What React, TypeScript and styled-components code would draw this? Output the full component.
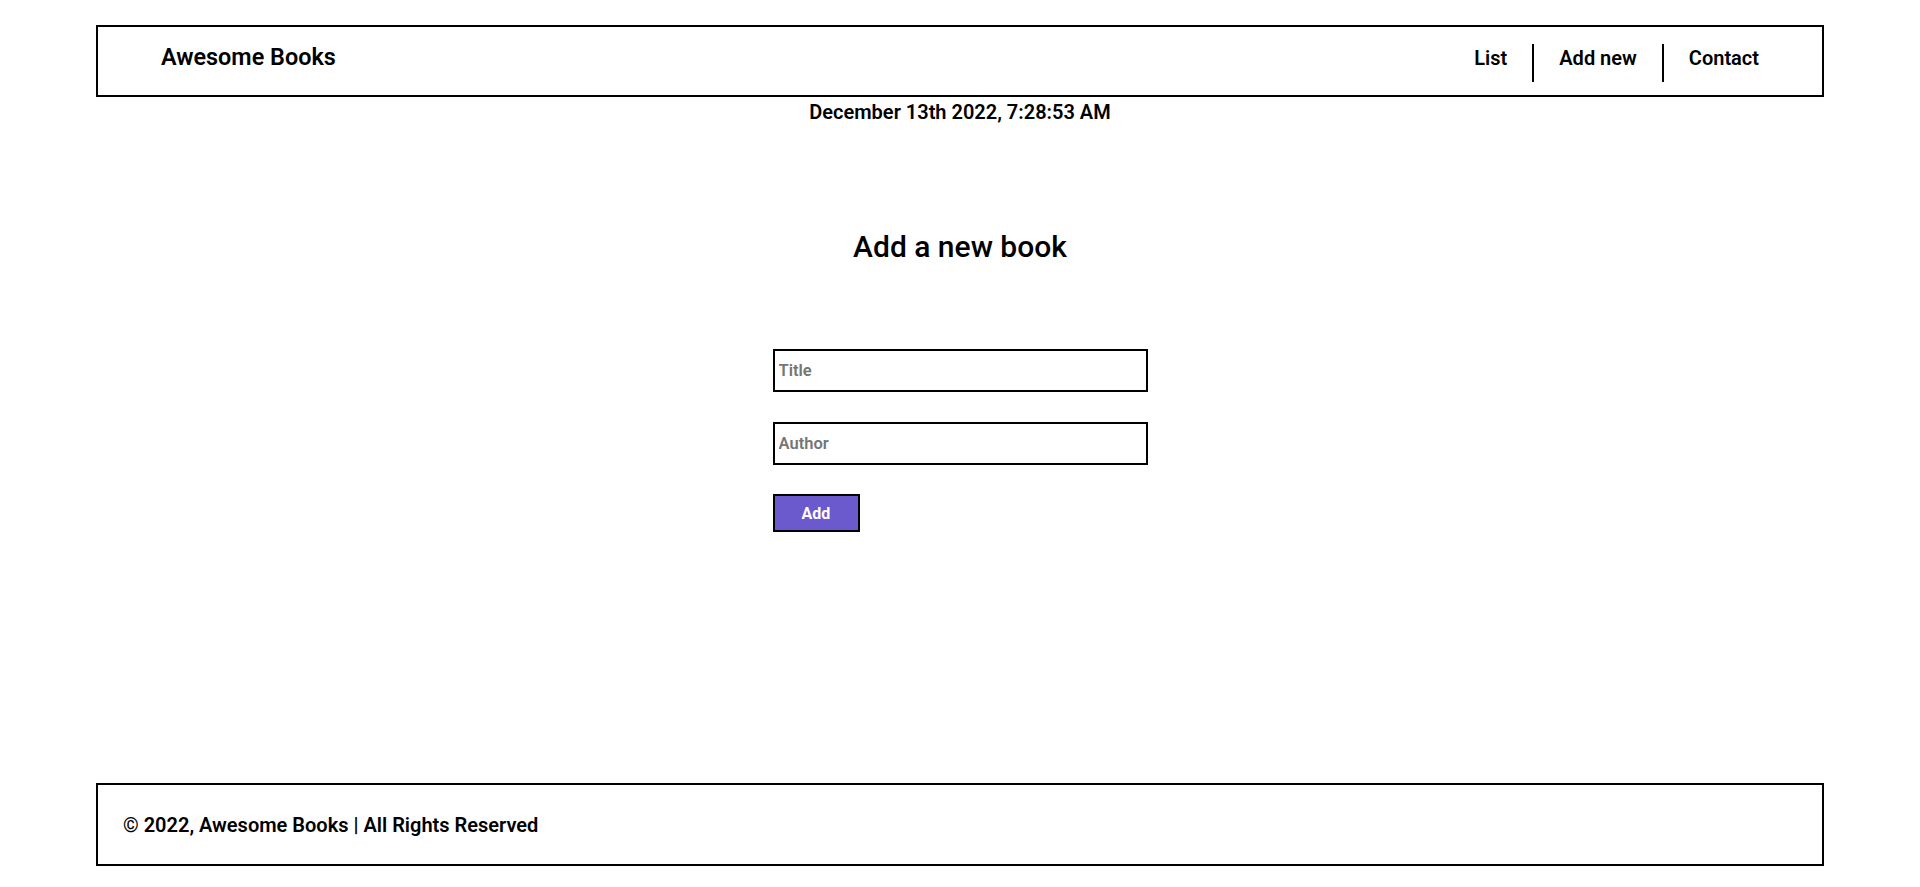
import React from "react";
import styled, { createGlobalStyle } from "styled-components";

const GlobalStyle = createGlobalStyle`
  * { box-sizing: border-box; }
  html, body { margin: 0; padding: 0; background: #fff; }
  body { font-family: Roboto, "Liberation Sans", Arial, sans-serif; color: #000; }
`;

const Page = styled.div`
  min-height: 100vh;
  display: flex;
  flex-direction: column;
  align-items: center;
`;

const Header = styled.header`
  width: 90%;
  height: 72px;
  margin-top: 25px;
  border: 2px solid #000;
  display: flex;
  align-items: center;
  justify-content: space-between;
  padding: 0 38px 8px 63px;
`;

const Logo = styled.h1`
  margin: 0;
  font-size: 23.4px;
  font-weight: 600;
`;

const NavList = styled.ul`
  list-style: none;
  margin: 12px 0 0;
  padding: 0;
  display: flex;
  align-items: stretch;
`;

const NavItem = styled.li<{ $divider?: boolean }>`
  padding: 2px 25px 12.6px;
  font-size: 20px;
  font-weight: 600;
  border-left: ${(p) => (p.$divider ? "2px solid #000" : "none")};
  cursor: pointer;
`;

const DateLine = styled.p`
  margin: 3px 0 0;
  font-size: 20px;
  font-weight: 600;
  text-align: center;
`;

const Main = styled.main`
  display: flex;
  flex-direction: column;
  align-items: center;
`;

const Heading = styled.h2`
  margin: 104.5px 0 0;
  font-size: 30px;
  font-weight: 500;
`;

const Form = styled.form`
  margin-top: 85.5px;
  width: 375px;
  display: flex;
  flex-direction: column;
  align-items: flex-start;
  gap: 29.5px;
`;

const Input = styled.input`
  width: 100%;
  height: 43px;
  border: 2px solid #000;
  padding: 0 4px;
  font-family: Roboto, "Liberation Sans", Arial, sans-serif;
  font-size: 16.5px;
  font-weight: 600;
  outline: none;
  &::placeholder {
    color: #757575;
    font-weight: 600;
  }
`;

const AddButton = styled.button`
  width: 87px;
  height: 38px;
  border: 2px solid #000;
  background: #6a5acd;
  color: #fff;
  font-family: Roboto, "Liberation Sans", Arial, sans-serif;
  font-size: 16px;
  font-weight: 700;
  cursor: pointer;
`;

const Footer = styled.footer`
  width: 90%;
  height: 83px;
  margin-top: auto;
  margin-bottom: 21px;
  border: 2px solid #000;
  display: flex;
  align-items: center;
  padding-left: 25px;
`;

const FooterText = styled.p`
  margin: 0;
  font-size: 20px;
  font-weight: 600;
`;

export default function App() {
  return (
    <>
      <GlobalStyle />
      <Page>
        <Header>
          <Logo>Awesome Books</Logo>
          <nav>
            <NavList>
              <NavItem>List</NavItem>
              <NavItem $divider>Add new</NavItem>
              <NavItem $divider>Contact</NavItem>
            </NavList>
          </nav>
        </Header>
        <DateLine>December 13th 2022, 7:28:53 AM</DateLine>
        <Main>
          <Heading>Add a new book</Heading>
          <Form onSubmit={(e) => e.preventDefault()}>
            <Input type="text" placeholder="Title" />
            <Input type="text" placeholder="Author" />
            <AddButton type="submit">Add</AddButton>
          </Form>
        </Main>
        <Footer>
          <FooterText>© 2022, Awesome Books | All Rights Reserved</FooterText>
        </Footer>
      </Page>
    </>
  );
}
